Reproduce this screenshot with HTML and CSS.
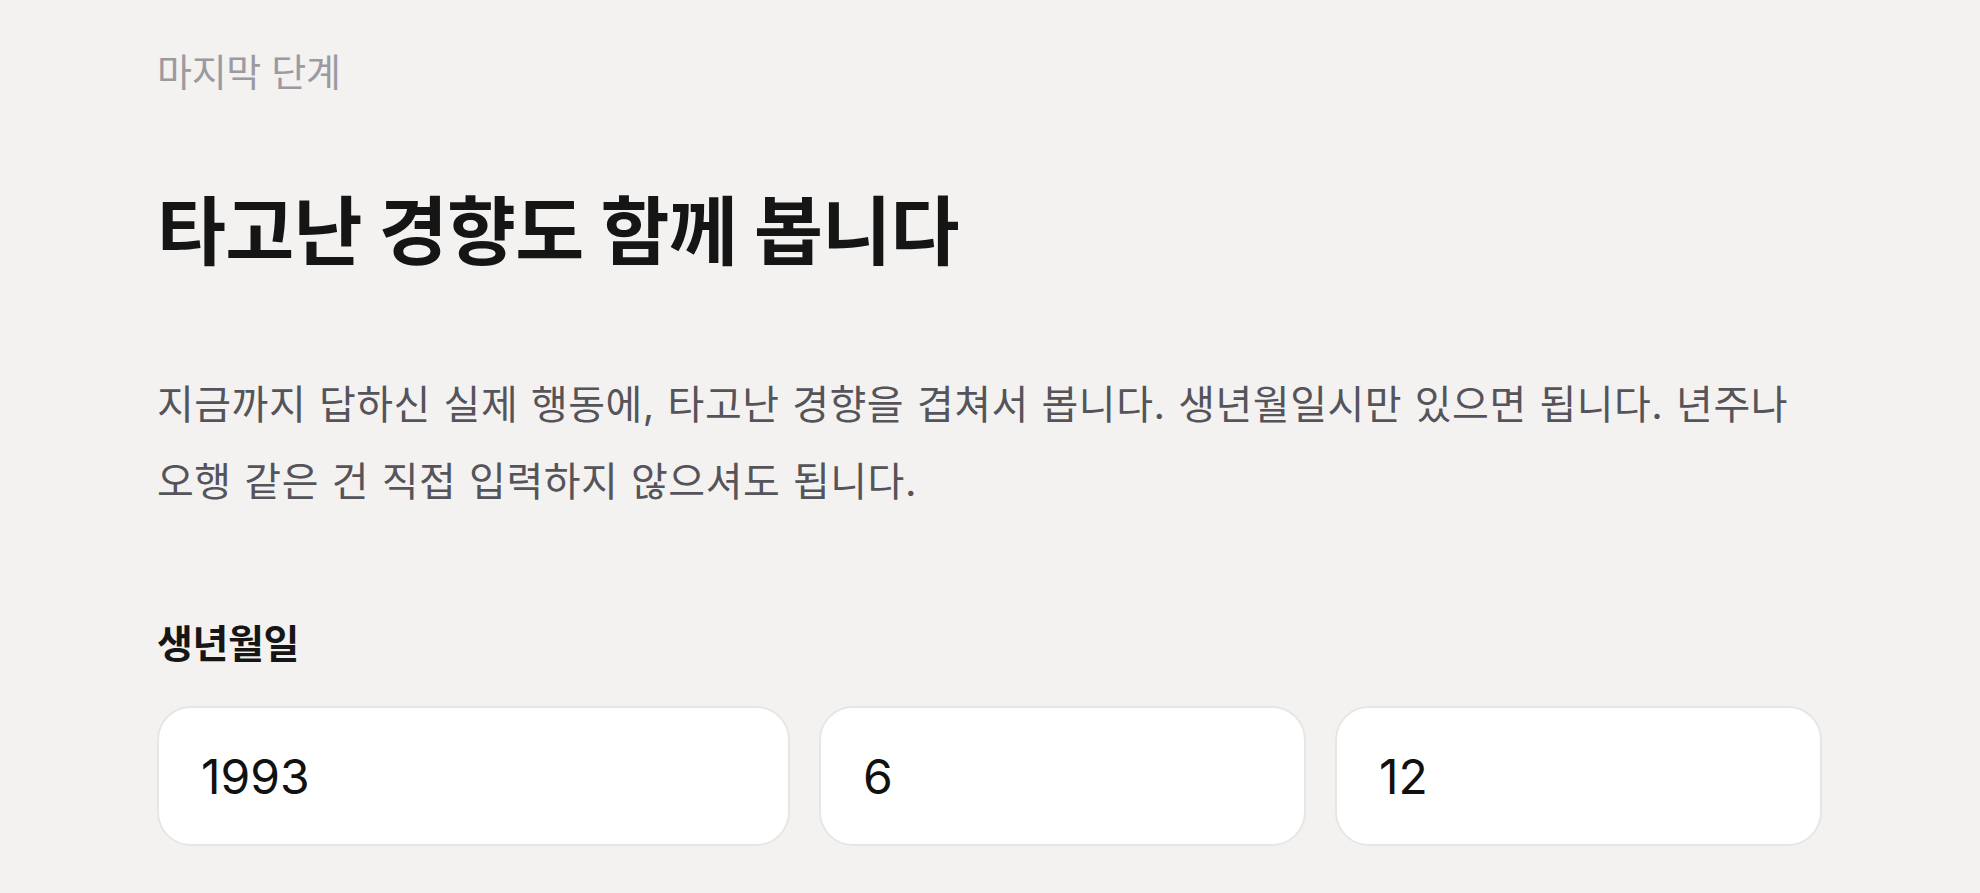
FILE: index.html
```html
<!DOCTYPE html>
<html lang="ko">
<head>
<meta charset="utf-8">
<title>마지막 단계</title>
<link rel="stylesheet" href="styles.css">
</head>
<body>
<main class="page">
  <p class="eyebrow">마지막 단계</p>
  <h1 class="title">타고난 경향도 함께 봅니다</h1>
  <p class="desc">지금까지 답하신 실제 행동에, 타고난 경향을 겹쳐서 봅니다. 생년월일시만 있으면 됩니다. 년주나 오행 같은 건 직접 입력하지 않으셔도 됩니다.</p>
  <section class="field">
    <label class="label">생년월일</label>
    <div class="inputs">
      <div class="box">1993</div>
      <div class="box">6</div>
      <div class="box">12</div>
    </div>
  </section>
</main>
</body>
</html>
```

FILE: styles.css
```css
html, body {
  margin: 0;
  padding: 0;
  background: #f3f2f0;
}
body {
  font-family: Inter, "Noto Sans CJK KR", sans-serif;
  color: #161616;
}
.page {
  padding: 42px 158px 0 157px;
  max-width: 1665px;
}
.eyebrow {
  margin: 0;
  font-size: 38px;
  line-height: 60px;
  color: #9b9aa0;
  letter-spacing: -0.3px;
}
.title {
  margin: 80px 0 0;
  font-size: 75px;
  line-height: 100px;
  font-weight: 700;
  letter-spacing: -0.01em;
  color: #151515;
}
.desc {
  margin: 84px 0 0;
  font-size: 40px;
  line-height: 77px;
  color: #55545b;
  letter-spacing: 0.5px;
  word-spacing: 1px;
}
.field {
  margin-top: 99px;
}
.label {
  display: block;
  font-size: 39px;
  line-height: 50px;
  font-weight: 700;
  letter-spacing: -0.01em;
  color: #161616;
}
.inputs {
  margin-top: 37px;
  display: grid;
  grid-template-columns: 1.3fr 1fr 1fr;
  gap: 29px;
}
.box {
  height: 140px;
  box-sizing: border-box;
  border: 2px solid #e8e6e4;
  border-radius: 34px;
  background: #ffffff;
  display: flex;
  align-items: center;
  padding-left: 42px;
  font-size: 48px;
  color: #111111;
}
```
